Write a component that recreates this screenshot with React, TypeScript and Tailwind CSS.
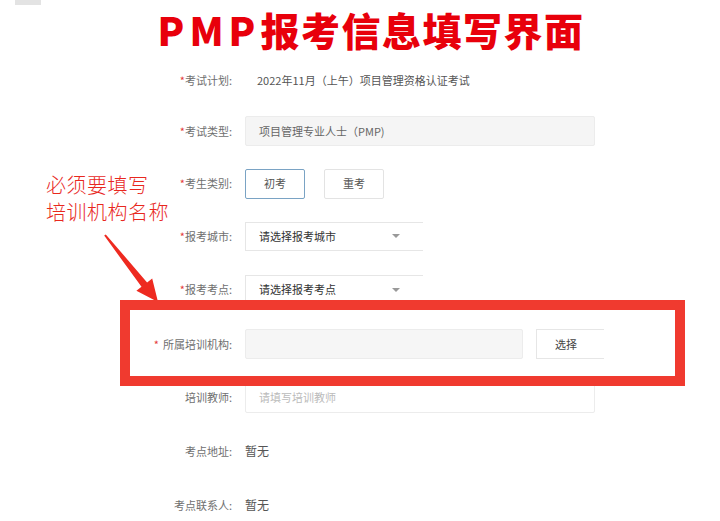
const cjk = { fontFamily: '"Noto Sans CJK SC", "Noto Sans", sans-serif' }

function Label({ text, required = true, spaced = false }: { text: string; required?: boolean; spaced?: boolean }) {
  return (
    <div className="w-[232px] shrink-0 text-right text-[11px] text-[#6f6f6f]">
      {required && <span className={`text-[#e4393c] ${spaced ? "mr-1" : ""}`}>*</span>}
      {text}:
    </div>
  )
}

function Row({ h, children }: { h: string; children: React.ReactNode }) {
  return <div className={`flex items-center gap-[13px] ${h}`}>{children}</div>
}

function Select({ placeholder }: { placeholder: string }) {
  return (
    <div className="flex h-[29px] w-[178px] items-center justify-between border-y border-l border-[#e6e6e6] pl-[13px] pr-[23px] text-[11px] text-[#333]">
      <span>{placeholder}</span>
      <span className="h-0 w-0 border-x-[4px] border-t-[4px] border-x-transparent border-t-[#999]" />
    </div>
  )
}

export default function App() {
  return (
    <div className="relative h-[521px] w-[720px] overflow-hidden bg-white" style={cjk}>
      <div className="absolute left-[15px] top-0 h-[5px] w-[26px] bg-[#e3e3e3]" />

      <div className="flex h-[55px] items-center justify-center pl-[22px] pt-[4px]">
        <h1 className="text-[39px] font-black leading-none tracking-[1.5px] text-[#e8000b]">
          <span className="tracking-[5px]">PMP</span>报考信息填写界面
        </h1>
      </div>

      <Row h="h-[50px]">
        <Label text="考试计划" />
        <span className="pl-[12px] text-[11px] text-[#555]">2022年11月（上午）项目管理资格认证考试</span>
      </Row>

      <Row h="h-[52px]">
        <Label text="考试类型" />
        <div className="flex h-[30px] w-[350px] items-center rounded-[2px] border border-[#ececec] bg-[#f5f5f5] pl-[13px] text-[11px] text-[#666]">
          项目管理专业人士（PMP)
        </div>
      </Row>

      <Row h="h-[53px]">
        <Label text="考生类别" />
        <div className="flex gap-[19px]">
          <button className="h-[30px] w-[60px] rounded-[2px] border border-[#7aa3c4] text-[11px] text-[#555]">初考</button>
          <button className="h-[30px] w-[60px] rounded-[2px] border border-[#e3e3e3] text-[11px] text-[#555]">重考</button>
        </div>
      </Row>

      <Row h="h-[52px]">
        <Label text="报考城市" />
        <Select placeholder="请选择报考城市" />
      </Row>

      <Row h="h-[55px]">
        <Label text="报考考点" />
        <Select placeholder="请选择报考考点" />
      </Row>

      <Row h="h-[54px]">
        <Label text="所属培训机构" spaced />
        <div className="h-[30px] w-[278px] rounded-[2px] border border-[#ececec] bg-[#f6f6f6]" />
        <div className="flex h-[30px] w-[68px] items-center border-y border-l border-[#e6e6e6] pl-[18px] text-[11px] text-[#444]">
          选择
        </div>
      </Row>

      <Row h="h-[53px]">
        <Label text="培训教师" required={false} />
        <div className="flex h-[30px] w-[350px] items-center rounded-[2px] border border-[#ececec] pl-[13px] text-[11px] text-[#bbb]">
          请填写培训教师
        </div>
      </Row>

      <Row h="h-[54px]">
        <Label text="考点地址" required={false} />
        <span className="text-[12px] text-[#555]">暂无</span>
      </Row>

      <Row h="h-[54px]">
        <Label text="考点联系人" required={false} />
        <span className="text-[12px] text-[#555]">暂无</span>
      </Row>

      {/* annotation */}
      <div className="absolute left-[46px] top-[172px] flex flex-col gap-[1px] text-[20px] font-light leading-[26px] tracking-[0.5px] text-[#e8281e]">
        <div>必须要填写</div>
        <div>培训机构名称</div>
      </div>

      <svg className="absolute left-0 top-0" width="720" height="521" viewBox="0 0 720 521">
        <polygon
          points="105.8,234.4 147.1,282.4 152.2,278.4 158,302 136.4,290.8 141.5,286.8 104.2,235.6"
          fill="#ee2a20"
        />
      </svg>

      <div className="absolute left-[120px] top-[300px] h-[86px] w-[565px] border-[10px] border-[#f03a2f]" />
    </div>
  )
}
